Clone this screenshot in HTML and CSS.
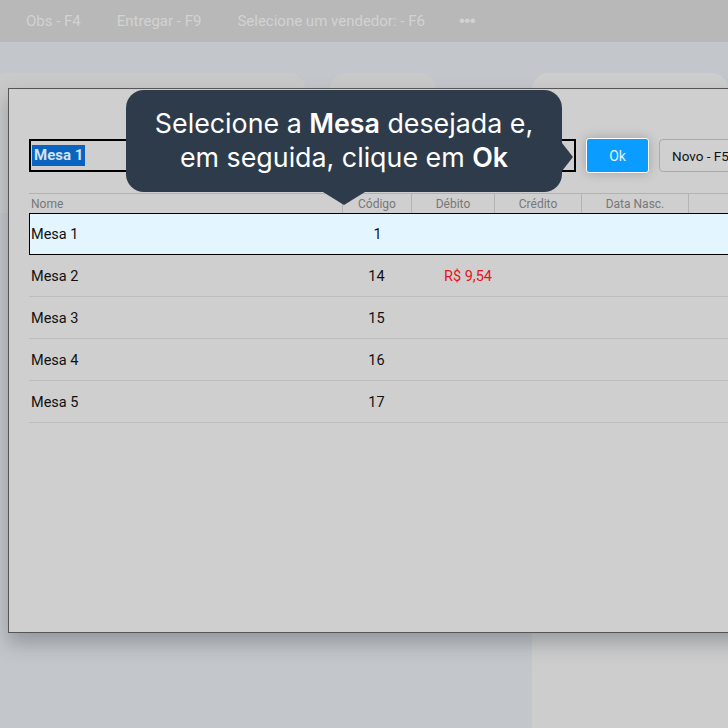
FILE: index.html
```html
<!DOCTYPE html>
<html lang="pt-BR">
<head>
<meta charset="utf-8">
<title>Mesa</title>
<link rel="stylesheet" href="styles.css">
</head>
<body>
<div class="page">
  <nav class="topbar">
    <span class="nav-item">Obs - F4</span>
    <span class="nav-item">Entregar - F9</span>
    <span class="nav-item">Selecione um vendedor: - F6</span>
    <span class="nav-item dots">&bull;&bull;&bull;</span>
  </nav>
  <div class="cards">
    <div class="card card-a"></div>
    <div class="card card-b"></div>
    <div class="card card-c"></div>
  </div>

  <div class="modal">
    <div class="search-row">
      <div class="search-input"><span class="selected-text">Mesa 1</span></div>
      <button class="btn-ok">Ok</button>
      <button class="btn-novo">Novo - F5</button>
    </div>
    <div class="table">
      <div class="thead">
        <div class="th th-left">Nome</div>
        <div class="th">Código</div>
        <div class="th">Débito</div>
        <div class="th">Crédito</div>
        <div class="th">Data Nasc.</div>
        <div class="th"></div>
      </div>
      <div class="tr tr-selected">
        <div class="td td-name">Mesa 1</div>
        <div class="td td-code">1</div>
        <div class="td td-debit"></div>
        <div class="td"></div>
        <div class="td"></div>
        <div class="td"></div>
      </div>
      <div class="tr">
        <div class="td td-name">Mesa 2</div>
        <div class="td td-code">14</div>
        <div class="td td-debit">R$ 9,54</div>
        <div class="td"></div>
        <div class="td"></div>
        <div class="td"></div>
      </div>
      <div class="tr">
        <div class="td td-name">Mesa 3</div>
        <div class="td td-code">15</div>
        <div class="td td-debit"></div>
        <div class="td"></div>
        <div class="td"></div>
        <div class="td"></div>
      </div>
      <div class="tr">
        <div class="td td-name">Mesa 4</div>
        <div class="td td-code">16</div>
        <div class="td td-debit"></div>
        <div class="td"></div>
        <div class="td"></div>
        <div class="td"></div>
      </div>
      <div class="tr">
        <div class="td td-name">Mesa 5</div>
        <div class="td td-code">17</div>
        <div class="td td-debit"></div>
        <div class="td"></div>
        <div class="td"></div>
        <div class="td"></div>
      </div>
    </div>
  </div>

  <div class="tooltip">
    <p class="tooltip-text">Selecione a <b>Mesa</b> desejada e,<br>em seguida, clique em <b>Ok</b></p>
  </div>
</div>
</body>
</html>
```

FILE: styles.css
```css
* { box-sizing: border-box; }

html, body {
  margin: 0;
  padding: 0;
}

body {
  background: #c3c6ca;
  font-family: Roboto, "Liberation Sans", Arial, sans-serif;
}

.page {
  position: relative;
  width: 728px;
  height: 728px;
  overflow: hidden;
  display: flex;
  flex-direction: column;
}

.topbar {
  height: 42px;
  flex: none;
  background: #b8b8b8;
  display: flex;
  align-items: center;
  gap: 36px;
  padding-left: 26px;
  color: #d2d2d2;
  font-size: 15px;
}

.dots {
  font-family: "Liberation Sans", sans-serif;
  font-size: 17px;
  letter-spacing: -0.5px;
  margin-left: -2px;
}

.cards {
  flex: 1;
  display: flex;
  align-items: flex-start;
  margin-top: 31px;
}

.card {
  background: #c9c9c9;
  border-radius: 16px 16px 0 0;
}

.card-a {
  width: 315px;
  height: 140px;
  margin-left: -10px;
}

.card-b {
  width: 106px;
  height: 60px;
  margin-left: 25px;
}

.card-c {
  flex: 1;
  align-self: stretch;
  margin-left: 96px;
  background: #cdcdcd;
}

.modal {
  position: absolute;
  left: 8px;
  top: 88px;
  width: 780px;
  height: 545px;
  background: #cfcfcf;
  border: 1px solid #555;
  box-shadow: 0 10px 18px rgba(60, 70, 80, 0.35);
  padding: 49px 0 0 20px;
}

.search-row {
  display: flex;
  align-items: center;
  gap: 10px;
  height: 35px;
}

.search-input {
  width: 547px;
  height: 33px;
  border: 2px solid #000;
  display: flex;
  align-items: center;
  padding-left: 1px;
}

.selected-text {
  background: #0b63c0;
  color: #d3e3f1;
  font-weight: 700;
  font-size: 15px;
  line-height: 21px;
  padding: 0 2px;
}

.btn-ok {
  width: 63px;
  height: 35px;
  background: #0a9cff;
  border: 1px solid #fff;
  border-radius: 3px;
  color: #e4f2ff;
  font-family: inherit;
  font-size: 14px;
  box-shadow: 0 0 12px rgba(0, 0, 0, 0.22);
  padding: 0;
}

.btn-novo {
  width: 100px;
  height: 33px;
  background: #d0d0d0;
  border: 1px solid #a9a9a9;
  border-radius: 4px;
  color: #111;
  font-family: inherit;
  font-size: 13.5px;
  text-align: left;
  padding-left: 12px;
}

.table {
  margin-top: 20px;
  width: 760px;
}

.thead, .tr {
  display: grid;
  grid-template-columns: 313px 69px 83px 87px 107px 1fr;
}

.thead {
  height: 20px;
  border-top: 1px solid #b2b2b2;
}

.th {
  border-left: 1px solid #b4b4b4;
  color: #777;
  font-size: 12px;
  display: flex;
  align-items: center;
  justify-content: center;
}

.th-left {
  border-left: none;
  justify-content: flex-start;
  padding-left: 2px;
}

.tr {
  height: 42px;
  border-bottom: 1px solid #bdbdbd;
  font-size: 14.5px;
  color: #111;
}

.tr-selected {
  height: 42px;
  background: #e3f6ff;
  border: 1px solid #000;
}

.td {
  display: flex;
  align-items: center;
  padding-top: 1px;
}

.td-name {
  padding-left: 2px;
}

.tr-selected .td-name {
  padding-left: 1px;
}

.td-code {
  justify-content: center;
}

.td-debit {
  justify-content: flex-end;
  padding-right: 2px;
  color: #e8121c;
}

.tooltip {
  position: absolute;
  left: 126px;
  top: 90px;
  width: 436px;
  height: 102px;
  background: #2d3b4b;
  border-radius: 18px;
  display: flex;
  align-items: center;
  justify-content: center;
}

.tooltip::after {
  content: "";
  position: absolute;
  left: 197px;
  top: 100%;
  border-left: 21px solid transparent;
  border-right: 21px solid transparent;
  border-top: 13px solid #2d3b4b;
}

.tooltip::before {
  content: "";
  position: absolute;
  left: 100%;
  top: 53px;
  border-top: 14px solid transparent;
  border-bottom: 14px solid transparent;
  border-left: 11px solid #2d3b4b;
}

.tooltip-text {
  margin: 0 0 2px;
  color: #fff;
  font-family: Inter, "Noto Sans", sans-serif;
  font-size: 26.8px;
  line-height: 34px;
  text-align: center;
  font-weight: 400;
}

.tooltip-text b {
  font-weight: 600;
}
```
